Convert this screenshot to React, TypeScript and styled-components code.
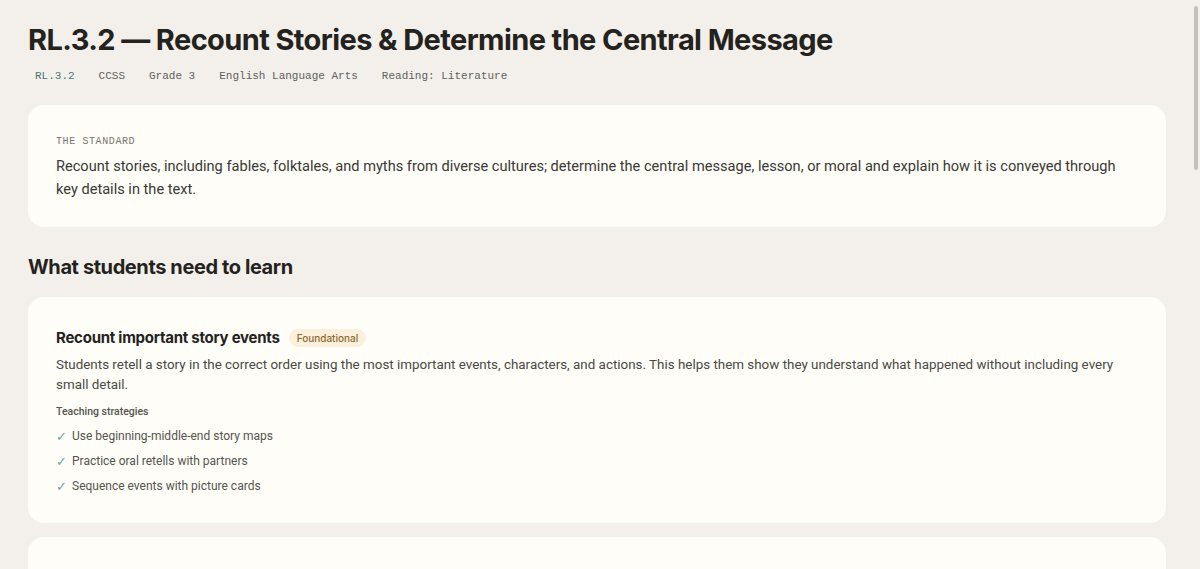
import { FC } from "react";
import styled, { createGlobalStyle } from "styled-components";

const GlobalStyle = createGlobalStyle`
  html {
    background: #f3f0eb;
  }
  body {
    margin: 0;
    background: #f3f0eb;
    color: #26241f;
    font-family: Roboto, "Noto Sans", sans-serif;
  }
  * {
    box-sizing: border-box;
  }
`;

const Page = styled.main`
  display: flex;
  flex-direction: column;
  padding: 22px 34px 40px 28px;
`;

const ScrollThumb = styled.div`
  position: fixed;
  top: 6px;
  right: 2px;
  width: 4px;
  height: 164px;
  border-radius: 2px;
  background: #c3c0bb;
`;

const Title = styled.h1`
  margin: 0;
  font-family: Inter, sans-serif;
  font-size: 29px;
  font-weight: 700;
  letter-spacing: -0.6px;
  line-height: 36px;
  color: #24221d;
`;

const TagRow = styled.div`
  display: flex;
  gap: 10px;
  margin-top: 9px;
`;

const Tag = styled.span<{ $accent?: boolean }>`
  padding: 2px 7px;
  font-family: "Liberation Mono", "DejaVu Sans Mono", monospace;
  font-size: 11px;
  line-height: 14px;
  color: ${(p) => (p.$accent ? "#4d7673" : "#5e615e")};
`;

const Card = styled.section`
  background: #fefdf8;
  border-radius: 16px;
  padding: 30px 28px 27px;
`;

const StandardCard = styled(Card)`
  margin-top: 20px;
  padding: 31px 28px 26px;
`;

const Label = styled.div`
  font-family: "Liberation Mono", "DejaVu Sans Mono", monospace;
  font-size: 10px;
  letter-spacing: 0.6px;
  color: #77766f;
  line-height: 12px;
`;

const StandardText = styled.p`
  margin: 7px 0 0;
  font-size: 14.6px;
  line-height: 23px;
  color: #3a3934;
`;

const SectionHeading = styled.h2`
  margin: 26px 0 16px;
  font-family: Inter, sans-serif;
  font-size: 20px;
  font-weight: 700;
  letter-spacing: -0.4px;
  line-height: 28px;
  color: #24221d;
`;

const CardList = styled.div`
  display: flex;
  flex-direction: column;
  gap: 14px;
`;

const CardHeader = styled.div`
  display: flex;
  align-items: center;
  gap: 9px;
`;

const CardTitle = styled.h3`
  margin: 0;
  font-family: Inter, sans-serif;
  font-size: 15px;
  font-weight: 700;
  letter-spacing: -0.25px;
  line-height: 22px;
  color: #24221d;
`;

const Badge = styled.span<{ $tone: "found" | "core" }>`
  padding: 3px 8px;
  border-radius: 999px;
  font-family: Inter, sans-serif;
  font-size: 10px;
  font-weight: 500;
  line-height: 12px;
  background: ${(p) => (p.$tone === "found" ? "#fbf0dc" : "#fdebd5")};
  color: ${(p) => (p.$tone === "found" ? "#8b6a2f" : "#9a5e24")};
`;

const Desc = styled.p`
  margin: 6px 0 0;
  font-size: 13.4px;
  line-height: 20px;
  color: #4a4944;
`;

const SubLabel = styled.div`
  margin-top: 10px;
  font-size: 10.5px;
  font-weight: 500;
  line-height: 14px;
  color: #55544e;
`;

const Strategies = styled.ul`
  list-style: none;
  margin: 8px 0 0;
  padding: 0;
  display: flex;
  flex-direction: column;
  gap: 6px;
`;

const Strategy = styled.li`
  display: flex;
  align-items: center;
  gap: 6px;
  font-size: 12px;
  line-height: 19px;
  color: #55544e;
`;

const Check = styled.span`
  width: 10px;
  color: #6aa597;
  font-family: "DejaVu Sans", sans-serif;
  font-size: 13px;
  line-height: 19px;
`;

type TSkill = {
  title: string;
  level: string;
  tone: "found" | "core";
  desc: string;
  strategies: string[];
};

const tags = ["RL.3.2", "CCSS", "Grade 3", "English Language Arts", "Reading: Literature"];

const skills: TSkill[] = [
  {
    title: "Recount important story events",
    level: "Foundational",
    tone: "found",
    desc: "Students retell a story in the correct order using the most important events, characters, and actions. This helps them show they understand what happened without including every small detail.",
    strategies: [
      "Use beginning-middle-end story maps",
      "Practice oral retells with partners",
      "Sequence events with picture cards",
    ],
  },
  {
    title: "Identify the central message or lesson",
    level: "Core skill",
    tone: "core",
    desc: "Students figure out what the author wants readers to learn from a fable, folktale, or myth. They put the lesson into their own words instead of simply naming a topic.",
    strategies: [
      "Compare the lessons of several fables",
      "Ask “What did the character learn?”",
      "Turn the moral into a class anchor chart",
    ],
  },
  {
    title: "Explain how key details convey the message",
    level: "Core skill",
    tone: "core",
    desc: "Students point to specific events, dialogue, and character choices in the text that show the central message, and explain how each detail supports it.",
    strategies: [
      "Use message-and-evidence graphic organizers",
      "Highlight clue sentences in the text",
      "Write short explanations with sentence frames",
    ],
  },
  {
    title: "Read stories from diverse cultures",
    level: "Foundational",
    tone: "found",
    desc: "Students read fables, folktales, and myths from many cultures and notice how similar lessons appear in stories told around the world.",
    strategies: [
      "Build a world folktale classroom library",
      "Map where each story comes from",
      "Compare versions of the same tale",
    ],
  },
];

const SkillCard: FC<{ skill: TSkill }> = ({ skill }) => (
  <Card>
    <CardHeader>
      <CardTitle>{skill.title}</CardTitle>
      <Badge $tone={skill.tone}>{skill.level}</Badge>
    </CardHeader>
    <Desc>{skill.desc}</Desc>
    <SubLabel>Teaching strategies</SubLabel>
    <Strategies>
      {skill.strategies.map((s) => (
        <Strategy key={s}>
          <Check>✓</Check>
          {s}
        </Strategy>
      ))}
    </Strategies>
  </Card>
);

export default function App() {
  return (
    <>
      <GlobalStyle />
      <ScrollThumb />
      <Page>
        <Title>RL.3.2 — Recount Stories &amp; Determine the Central Message</Title>
        <TagRow>
          {tags.map((t, i) => (
            <Tag key={t} $accent={i === 0}>
              {t}
            </Tag>
          ))}
        </TagRow>
        <StandardCard>
          <Label>THE STANDARD</Label>
          <StandardText>
            Recount stories, including fables, folktales, and myths from diverse cultures; determine the
            central message, lesson, or moral and explain how it is conveyed through key details in the text.
          </StandardText>
        </StandardCard>
        <SectionHeading>What students need to learn</SectionHeading>
        <CardList>
          {skills.map((s) => (
            <SkillCard key={s.title} skill={s} />
          ))}
        </CardList>
      </Page>
    </>
  );
}
